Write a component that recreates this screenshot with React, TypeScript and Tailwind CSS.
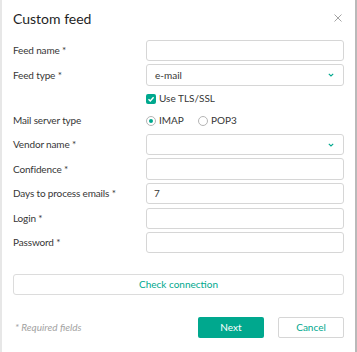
import React from "react";

const Label = ({ children }: { children: React.ReactNode }) => (
  <div className="w-[133px] shrink-0 text-[10px] tracking-[-0.15px] text-[#363636]">{children}</div>
);

const Input = ({ value }: { value?: string }) => (
  <div className="flex-1 h-full rounded-[3px] border border-[#d6d6d6] bg-white flex items-center px-[7px] text-[10px] text-[#363636]">
    {value}
  </div>
);

const Select = ({ value }: { value?: string }) => (
  <div className="flex-1 h-full rounded-[3px] border border-[#d6d6d6] bg-white flex items-center justify-between pl-[8px] pr-[9px] text-[10px] text-[#363636]">
    <span>{value}</span>
    <svg width="6" height="4" viewBox="0 0 6 4" fill="none">
      <path d="M0.8 0.8 L3 3 L5.2 0.8" stroke="#00a88e" strokeWidth="1.1" />
    </svg>
  </div>
);

export default function App() {
  return (
    <div
      className="w-[357px] h-[352px] bg-white border-l-2 border-l-[#e7e7e7] border-r-2 border-r-[#b9b9b9] flex flex-col pl-[11px] pr-[11px]"
      style={{ fontFamily: "Lato, 'Noto Sans', sans-serif" }}
    >
      <div className="h-[40px] flex items-start justify-between pt-[9px]">
        <div className="text-[14px] leading-[20px] text-[#1f1f1f]">Custom feed</div>
        <svg className="mt-[5px] mr-[2px]" width="8" height="8" viewBox="0 0 8 8">
          <path d="M0.5 0.5 L7.5 7.5 M7.5 0.5 L0.5 7.5" stroke="#9a9a9a" strokeWidth="0.9" />
        </svg>
      </div>

      <div className="flex items-center h-[21px]">
        <Label>Feed name *</Label>
        <Input />
      </div>
      <div className="flex items-center h-[22px] mt-[3px]">
        <Label>Feed type *</Label>
        <Select value="e-mail" />
      </div>
      <div className="flex items-center h-[21px] mt-[2px]">
        <div className="w-[133px] shrink-0" />
        <div className="w-[10px] h-[10px] rounded-[2px] bg-[#00a88e] flex items-center justify-center">
          <svg width="8" height="8" viewBox="0 0 8 8" fill="none">
            <path d="M1.5 4.2 L3.3 6 L6.6 2.2" stroke="white" strokeWidth="1.4" />
          </svg>
        </div>
        <span className="ml-[3px] text-[10px] text-[#363636]">Use TLS/SSL</span>
      </div>
      <div className="flex items-center h-[21px] mt-[1px]">
        <Label>Mail server type</Label>
        <div className="flex items-center">
          <div className="w-[10px] h-[10px] rounded-full border border-[#b5b5b5] flex items-center justify-center">
            <div className="w-[4px] h-[4px] rounded-full bg-[#00a88e]" />
          </div>
          <span className="ml-[3px] text-[10px] text-[#363636]">IMAP</span>
          <div className="ml-[14px] w-[10px] h-[10px] rounded-full border border-[#b5b5b5]" />
          <span className="ml-[3px] text-[10px] text-[#363636]">POP3</span>
        </div>
      </div>
      <div className="flex items-center h-[21px] mt-[3px]">
        <Label>Vendor name *</Label>
        <Select />
      </div>
      <div className="flex items-center h-[22px] mt-[3px]">
        <Label>Confidence *</Label>
        <Input />
      </div>
      <div className="flex items-center h-[21px] mt-[3px]">
        <Label>Days to process emails *</Label>
        <Input value="7" />
      </div>
      <div className="flex items-center h-[21px] mt-[4px]">
        <Label>Login *</Label>
        <Input />
      </div>
      <div className="flex items-center h-[21px] mt-[3px]">
        <Label>Password *</Label>
        <Input />
      </div>

      <div className="mt-[21px] h-[21px] rounded-[3px] border border-[#dcdcdc] flex items-center justify-center text-[10px] text-[#00a88e]">
        Check connection
      </div>

      <div className="mt-[22px] h-[21px] flex items-center">
        <div className="flex-1 pl-[2px] text-[10px] italic text-[#a3a3a3]">* Required fields</div>
        <div className="w-[66px] h-full rounded-[2px] bg-[#00a88e] text-white text-[10px] flex items-center justify-center">
          Next
        </div>
        <div className="ml-[14px] w-[66px] h-full rounded-[2px] border border-[#d6d6d6] text-[#00a88e] text-[10px] flex items-center justify-center">
          Cancel
        </div>
      </div>
    </div>
  );
}
